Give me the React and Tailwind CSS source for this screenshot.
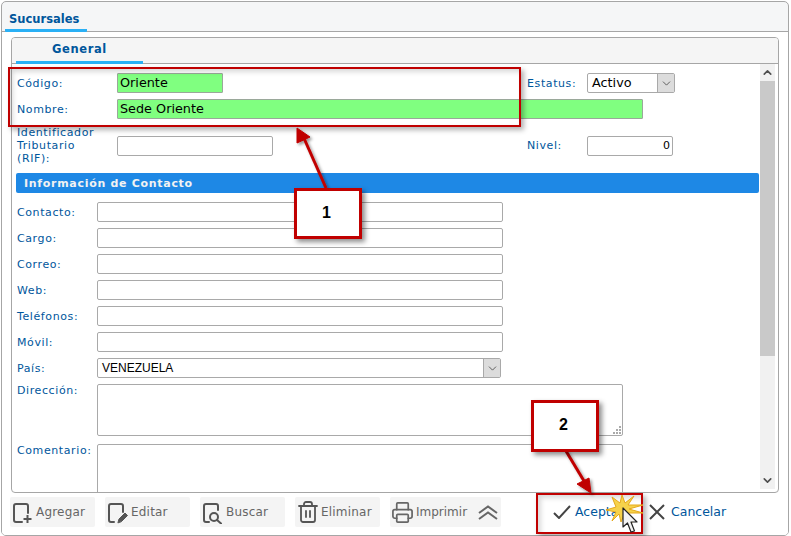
import React from "react";
import { Trash2, Printer, ChevronUp, ChevronDown } from "lucide-react";

const F = "[font-family:'DejaVu_Sans',Verdana,sans-serif]";
const labelC = "text-[11px] leading-[13px] text-[#00569c] tracking-[0.6px]";
const inputC = "h-[20px] border border-[#a9a9a9] rounded-[2px] bg-white shrink-0";
const greenC = "h-[20px] border border-[#9aa89a] rounded-[1px] bg-[#80ff80] shrink-0 text-[12.8px] leading-[18px] text-black pl-[2px]";

function ContactRow({ label, mt = "mt-[6px]" }) {
  return (
    <div className={`flex items-center h-[20px] ${mt}`}>
      <span className={`w-[81px] pl-px ${labelC}`}>{label}</span>
      <div className={`${inputC} w-[406px]`} />
    </div>
  );
}

function DocIcon({ children }) {
  return (
    <svg width="24" height="24" viewBox="0 0 24 24" fill="none" stroke="#555" strokeWidth="2" strokeLinecap="round" className="shrink-0">
      {children}
    </svg>
  );
}

function ToolBtn({ icon, label }) {
  return (
    <div className="flex items-center w-[85px] h-[30px] bg-[#f4f4f4] rounded-[2px] pl-[1px] shrink-0">
      {icon}
      <span className="ml-[1px] text-[12px] text-[#666] tracking-[0.2px]">{label}</span>
    </div>
  );
}

function Resize({ className }) {
  return (
    <svg width="8" height="8" viewBox="0 0 8 8" className={className} fill="#aaa">
      <rect x="6" y="0" width="2" height="2" /><rect x="3" y="3" width="2" height="2" /><rect x="6" y="3" width="2" height="2" />
      <rect x="0" y="6" width="2" height="2" /><rect x="3" y="6" width="2" height="2" /><rect x="6" y="6" width="2" height="2" />
    </svg>
  );
}

function SelectArrow() {
  return (
    <span className="absolute right-0 top-0 w-[17px] h-[18px] bg-[#dcdcdc] border-l border-[#a9a9a9] flex items-center justify-center">
      <ChevronDown size={13} color="#444" strokeWidth={1.5} />
    </span>
  );
}

export default function App() {
  return (
    <div className={`relative w-[791px] h-[536px] bg-white overflow-hidden ${F}`}>
      <div className="w-[788px] h-[535px] ml-px mt-px border border-[#a6a6a6] rounded-[5px] bg-[#f5f6f7] flex flex-col overflow-hidden">
        {/* Header tab */}
        <div className="h-[30px] shrink-0 border-b border-[#a6a6a6] pl-[3px] flex items-end">
          <div className="w-[82px] h-[29px] pl-[4px] pt-[9px] border-b-[3px] border-[#2ab0f5] -mb-px rounded-b-[1px] text-[11.5px] leading-[14px] font-bold text-[#00569c]">Sucursales</div>
        </div>
        {/* White body */}
        <div className="flex-1 bg-white flex flex-col px-[9px] pt-[5px]">
          {/* Inner panel */}
          <div className="h-[456px] border border-[#a6a6a6] rounded-[4px] flex flex-col overflow-hidden shrink-0">
            <div className="h-[26px] shrink-0 bg-[#f5f5f5] border-b border-[#a6a6a6] pl-[4px] flex items-end">
              <div className="w-[127px] h-[25px] pl-[36px] pt-[3px] border-b-[3px] border-[#2ab0f5] -mb-px text-[11.5px] leading-[14px] font-bold text-[#00569c] tracking-[0.6px]">General</div>
            </div>
            <div className="flex flex-1 min-h-0">
              {/* Form */}
              <div className="w-[747px] pl-[4px] pt-[9px] shrink-0 overflow-hidden">
                <div className="flex items-center h-[20px]">
                  <span className={`w-[101px] pl-px ${labelC}`}>Código:</span>
                  <div className={`${greenC} w-[106px]`}>Oriente</div>
                  <span className={`ml-[304px] w-[60px] ${labelC}`}>Estatus:</span>
                  <div className="relative flex items-center w-[88px] h-[20px] border border-[#a9a9a9] rounded-[2px] pl-[4px] text-[12.8px] text-black">
                    Activo
                    <SelectArrow />
                  </div>
                </div>
                <div className="flex items-center h-[20px] mt-[6px]">
                  <span className={`w-[101px] pl-px ${labelC}`}>Nombre:</span>
                  <div className={`${greenC} w-[526px]`}>Sede Oriente</div>
                </div>
                <div className="flex items-center h-[39px] mt-[7px]">
                  <span className={`w-[101px] pl-px pr-[14px] ${labelC}`}>Identificador Tributario (RIF):</span>
                  <div className={`${inputC} w-[156px]`} />
                  <span className={`ml-[254px] w-[60px] ${labelC}`}>Nivel:</span>
                  <div className={`${inputC} w-[86px] text-right pr-[2px] text-[11px] leading-[18px] text-black`}>0</div>
                </div>
                <div className="h-[20px] mt-[8px] bg-[#1e88e5] rounded-[2px] pl-[8px] text-[11px] leading-[21px] font-bold text-[#f2f2f2] tracking-[0.7px]">Información de Contacto</div>
                <ContactRow label="Contacto:" mt="mt-[9px]" />
                <ContactRow label="Cargo:" />
                <ContactRow label="Correo:" />
                <ContactRow label="Web:" />
                <ContactRow label="Teléfonos:" />
                <ContactRow label="Móvil:" />
                <div className="flex items-center h-[20px] mt-[6px]">
                  <span className={`w-[81px] pl-px ${labelC}`}>País:</span>
                  <div className="relative w-[404px] h-[20px] border border-[#a9a9a9] rounded-[2px] pl-[4px] text-[12px] leading-[18px] font-['Liberation_Sans'] text-black">
                    VENEZUELA
                    <SelectArrow />
                  </div>
                </div>
                <div className="flex mt-[6px]">
                  <span className={`w-[81px] pl-px ${labelC}`}>Dirección:</span>
                  <div className="relative w-[526px] h-[52px] border border-[#a9a9a9] rounded-[2px]">
                    <Resize className="absolute right-[1px] bottom-[1px]" />
                  </div>
                </div>
                <div className="flex mt-[8px]">
                  <span className={`w-[81px] pl-px ${labelC}`}>Comentario:</span>
                  <div className="relative w-[526px] h-[52px] border border-[#a9a9a9] rounded-[2px]" />
                </div>
              </div>
              {/* Scrollbar */}
              <div className="w-[15px] ml-[1px] mb-[3px] bg-[#f1f1f1] flex flex-col shrink-0">
                <div className="h-[17px] flex items-center justify-center shrink-0">
                  <ChevronUp size={13} color="#505050" strokeWidth={3} />
                </div>
                <div className="h-[275px] bg-[#c9c9c9] shrink-0" />
                <div className="flex-1" />
                <div className="h-[17px] flex items-center justify-center shrink-0">
                  <ChevronDown size={13} color="#505050" strokeWidth={3} />
                </div>
              </div>
            </div>
          </div>
          {/* Toolbar */}
          <div className="flex items-center mt-[4px] h-[30px]">
            <div className="flex gap-[10px] items-center -ml-[1px]">
              <ToolBtn label="Agregar" icon={
                <DocIcon>
                  <path d="M17 13V6a2 2 0 0 0-2-2H5a2 2 0 0 0-2 2v14a2 2 0 0 0 2 2h6" />
                  <path d="M12.500 19h8M16.500 15v8" strokeLinecap="butt" />
                </DocIcon>
              } />
              <ToolBtn label="Editar" icon={
                <DocIcon>
                  <path d="M17 12V6a2 2 0 0 0-2-2H5a2 2 0 0 0-2 2v14a2 2 0 0 0 2 2h3" />
                  <path d="M12 22.500l1-3.500 6-6 2.500 2.500-6 6z" fill="#555" strokeWidth="1" />
                </DocIcon>
              } />
              <ToolBtn label="Buscar" icon={
                <DocIcon>
                  <path d="M17 10V6a2 2 0 0 0-2-2H5a2 2 0 0 0-2 2v14a2 2 0 0 0 2 2h3" />
                  <circle cx="13" cy="17" r="4" />
                  <path d="M16 20l4 3.500" />
                </DocIcon>
              } />
              <ToolBtn label="Eliminar" icon={<Trash2 size={24} color="#555" strokeWidth={1.8} className="shrink-0" />} />
              <div className="flex items-center w-[111px] h-[30px] bg-[#f4f4f4] rounded-[2px] pl-[1px] shrink-0">
                <Printer size={23} color="#666" strokeWidth={1.8} className="shrink-0" />
                <span className="ml-[2px] w-[62px] shrink-0 text-[12px] text-[#666]">Imprimir</span>
                <svg width="20" height="15" viewBox="0 0 20 15" fill="none" stroke="#666" strokeWidth="2" className="shrink-0">
                  <path d="M1 8l9-6.500 9 6.500M1 14l9-6.500 9 6.500" />
                </svg>
              </div>
            </div>
            <div className="ml-[52px] flex items-center">
              <svg width="18" height="14" viewBox="0 0 18 14" fill="none" stroke="#444" strokeWidth="2" className="shrink-0">
                <path d="M1 8l5 5L17 1" />
              </svg>
              <span className="ml-[4px] w-[74px] shrink-0 text-[12.5px] text-[#00569c]">Aceptar</span>
              <svg width="16" height="16" viewBox="0 0 16 16" fill="none" stroke="#444" strokeWidth="2" className="shrink-0">
                <path d="M1 1l14 14M15 1L1 15" />
              </svg>
              <span className="ml-[6px] text-[12.5px] text-[#00569c]">Cancelar</span>
            </div>
          </div>
        </div>
      </div>

      {/* Annotation overlays */}
      <div className="absolute left-[8px] top-[67px] w-[513px] h-[60px] border-[2px] border-[#c00000] shadow-[3px_3px_5px_rgba(0,0,0,0.3),inset_3px_3px_5px_rgba(0,0,0,0.15)]" />
      <div className="absolute left-[536px] top-[493px] w-[107px] h-[41px] border-[2px] border-[#c00000] shadow-[3px_3px_5px_rgba(0,0,0,0.3),inset_3px_3px_5px_rgba(0,0,0,0.15)]" />
      <svg className="absolute left-0 top-0 pointer-events-none" width="791" height="536" viewBox="0 0 791 536">
        <defs>
          <filter id="s" x="-30%" y="-30%" width="160%" height="160%">
            <feDropShadow dx="2" dy="2" stdDeviation="1.5" floodColor="#000" floodOpacity="0.4" />
          </filter>
        </defs>
        <g filter="url(#s)" fill="#c00000" stroke="#c00000">
          <path d="M326 188L303 136" strokeWidth="3" fill="none" />
          <path d="M297 128L310 137L297 143z" strokeWidth="1" />
          <path d="M566 451L584 481" strokeWidth="3" fill="none" />
          <path d="M591 493L577 484L589 478z" strokeWidth="1" />
        </g>
        {/* Star */}
        <path
          d="M612 497L620 503L622 495L625 503L634 496L628 505L643 505L629 509L643 513L628 513L632 523L624 515L621 522L619 514L612 521L616 512L606 510L616 507z"
          fill="#f6d24a"
          stroke="#e5a81c"
          strokeWidth="1"
          strokeLinejoin="miter"
        />
        {/* Cursor */}
        <path d="M623 508L623 527L627.500 523L631 532L634.500 531L631 522L637 522z" fill="#f4f4f4" stroke="#222" strokeWidth="1.200" strokeLinejoin="round" />
      </svg>
      <div className="absolute left-[294px] top-[188px] w-[68px] h-[51px] border-[3px] border-[#c00000] bg-white shadow-[3px_3px_5px_rgba(0,0,0,0.45)] flex items-center justify-center pr-[3px] pb-[2px] text-[16px] font-bold text-black font-['Liberation_Sans']">1</div>
      <div className="absolute left-[531px] top-[400px] w-[68px] h-[52px] border-[3px] border-[#c00000] bg-white shadow-[3px_3px_5px_rgba(0,0,0,0.45)] flex items-center justify-center pr-[3px] pb-[2px] text-[16px] font-bold text-black font-['Liberation_Sans']">2</div>
    </div>
  );
}
